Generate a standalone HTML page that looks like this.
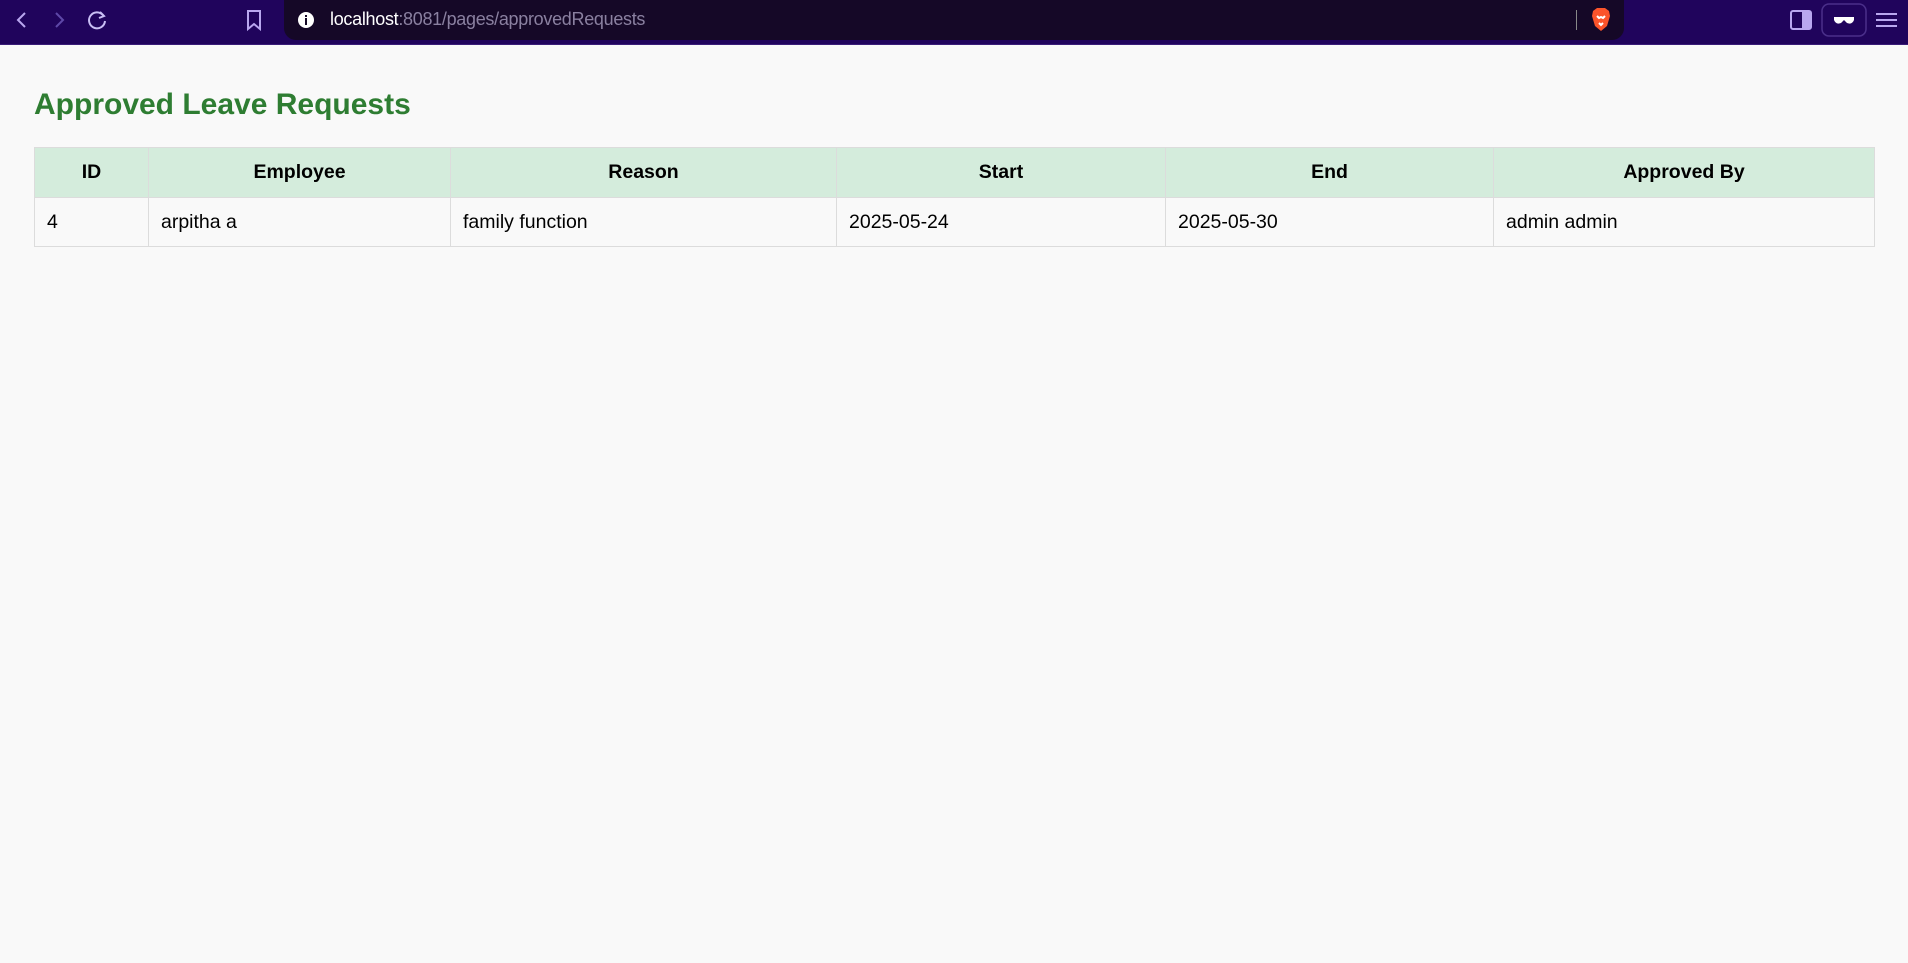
<!DOCTYPE html>
<html><head><meta charset="utf-8"><style>
html,body{margin:0;padding:0;width:1908px;height:963px;overflow:hidden;background:#f9f9f9;font-family:"Liberation Sans",Arial,sans-serif;}
.bar{position:absolute;left:0;top:0;width:1908px;height:45px;background:#20045c;border-bottom:1px solid #3a1d78;box-sizing:border-box;}
.url{position:absolute;left:284px;top:0;width:1340px;height:40px;background:#150827;border-radius:0 0 12px 12px;}
.url .t{position:absolute;left:46px;top:9px;font-size:18px;color:#fff;letter-spacing:-0.3px}
.url .t span{color:#8a80a0}
h1{position:absolute;left:34px;top:88px;margin:0;font-size:30px;font-weight:bold;color:#2e7d32;}
table{position:absolute;left:34px;top:147px;width:1841px;border-collapse:collapse;font-size:19.5px;table-layout:fixed}
th,td{border:1px solid #dcdcdc;padding:0 12px;}
th{background:#d4ecdc;height:49px;font-weight:bold;text-align:center}
td{height:48px;text-align:left}
</style></head><body>
<div class="bar">
<svg width="1908" height="45" style="position:absolute;left:0;top:0">
<path d="M25 13 L18 20 L25 27" stroke="#b9a7f0" stroke-width="2" fill="none"/>
<path d="M56 13 L63 20 L56 27" stroke="#5e48a8" stroke-width="2" fill="none"/>
<path d="M103 15 A8 8 0 1 0 105 21" stroke="#c9bff5" stroke-width="2" fill="none"/>
<path d="M100 12 L104 16 L99 18" stroke="#c9bff5" stroke-width="2" fill="none"/>
<path d="M248 11 h12 v18 l-6 -5 l-6 5 z" stroke="#b9a7f0" stroke-width="2" fill="none"/>
<rect x="1791" y="11" width="20" height="18" rx="2" fill="none" stroke="#b9a7f0" stroke-width="2"/>
<rect x="1802" y="11" width="9" height="18" fill="#b9a7f0"/>
<rect x="1822" y="4" width="44" height="32" rx="7" fill="none" stroke="#4a2f8a" stroke-width="1.5"/>
<path d="M1834 17 h20 v3 q-2 5 -7 3 l-3 -3 l-3 3 q-5 2 -7 -3z" fill="#fff"/>
<path d="M1876 14 h21 M1876 20 h21 M1876 26 h21" stroke="#b9a7f0" stroke-width="2"/>
</svg>
<div class="url">
<svg width="20" height="20" style="position:absolute;left:12px;top:10px"><circle cx="10" cy="10" r="8" fill="#fff"/><rect x="9" y="8" width="2" height="7" fill="#150827"/><rect x="9" y="5" width="2" height="2" fill="#150827"/></svg>
<div class="t">localhost<span>:8081/pages/approvedRequests</span></div>
<div style="position:absolute;left:1292px;top:10px;width:1px;height:20px;background:#888"></div>
<svg width="22" height="24" style="position:absolute;left:1306px;top:8px"><path d="M3 3 L7 0 H15 L19 3 L20 8 L17 18 L11 23 L5 18 L2 8Z" fill="#fb542b"/><path d="M7 8 L9 10 L11 9 L13 10 L15 8 M9 15 L11 17 L13 15" stroke="#fff" stroke-width="2" fill="none"/></svg>
</div>
</div>
<h1>Approved Leave Requests</h1>
<table>
<colgroup><col style="width:114px"><col style="width:302px"><col style="width:386px"><col style="width:329px"><col style="width:328px"><col style="width:381px"></colgroup>
<tr><th>ID</th><th>Employee</th><th>Reason</th><th>Start</th><th>End</th><th>Approved By</th></tr>
<tr><td>4</td><td>arpitha a</td><td>family function</td><td>2025-05-24</td><td>2025-05-30</td><td>admin admin</td></tr>
</table>
</body></html>
